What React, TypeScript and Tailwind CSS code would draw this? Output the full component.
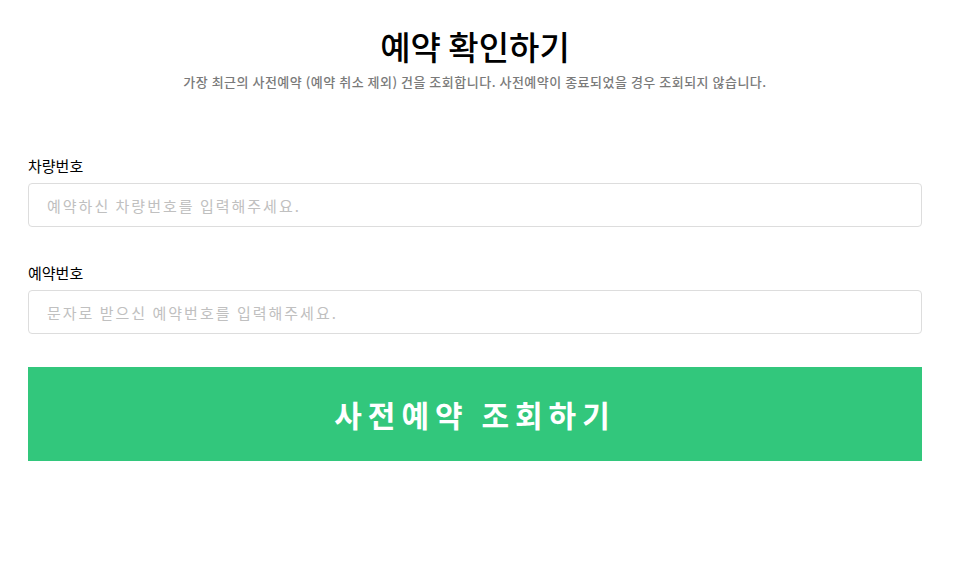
import * as React from 'react';

const font = { fontFamily: '"Noto Sans CJK KR", "Noto Sans", sans-serif' };

export default function App() {
  return (
    <div className="min-h-[562px] bg-white" style={font}>
      <div className="ml-[28px] w-[894px] pt-[23px]">
        <h1 className="text-center text-[33px] font-medium leading-[46px] text-black">
          예약 확인하기
        </h1>
        <p className="mt-[4px] text-center text-[13px] font-medium leading-[18px] tracking-[0.5px] text-[#7a7a7a]">
          가장 최근의 사전예약 (예약 취소 제외) 건을 조회합니다. 사전예약이 종료되었을 경우 조회되지 않습니다.
        </p>

        <div className="mt-[65px]">
          <label className="block text-[15px] leading-[20px] text-black">차량번호</label>
          <input
            type="text"
            placeholder="예약하신 차량번호를 입력해주세요."
            className="mt-[7px] block h-[44px] w-full rounded-[4px] border border-[#dddddd] px-[18px] text-[15px] tracking-[2px] text-[#333] placeholder:text-[#c0c0c0] outline-none"
          />
        </div>

        <div className="mt-[36px]">
          <label className="block text-[15px] leading-[20px] text-black">예약번호</label>
          <input
            type="text"
            placeholder="문자로 받으신 예약번호를 입력해주세요."
            className="mt-[7px] block h-[44px] w-full rounded-[4px] border border-[#dddddd] px-[18px] text-[15px] tracking-[2px] text-[#333] placeholder:text-[#c0c0c0] outline-none"
          />
        </div>

        <button
          type="button"
          className="mt-[33px] flex h-[94px] w-full items-center justify-center bg-[#32c77c] text-[30px] font-bold tracking-[6px] text-white"
        >
          사전예약 조회하기
        </button>
      </div>
    </div>
  );
}
